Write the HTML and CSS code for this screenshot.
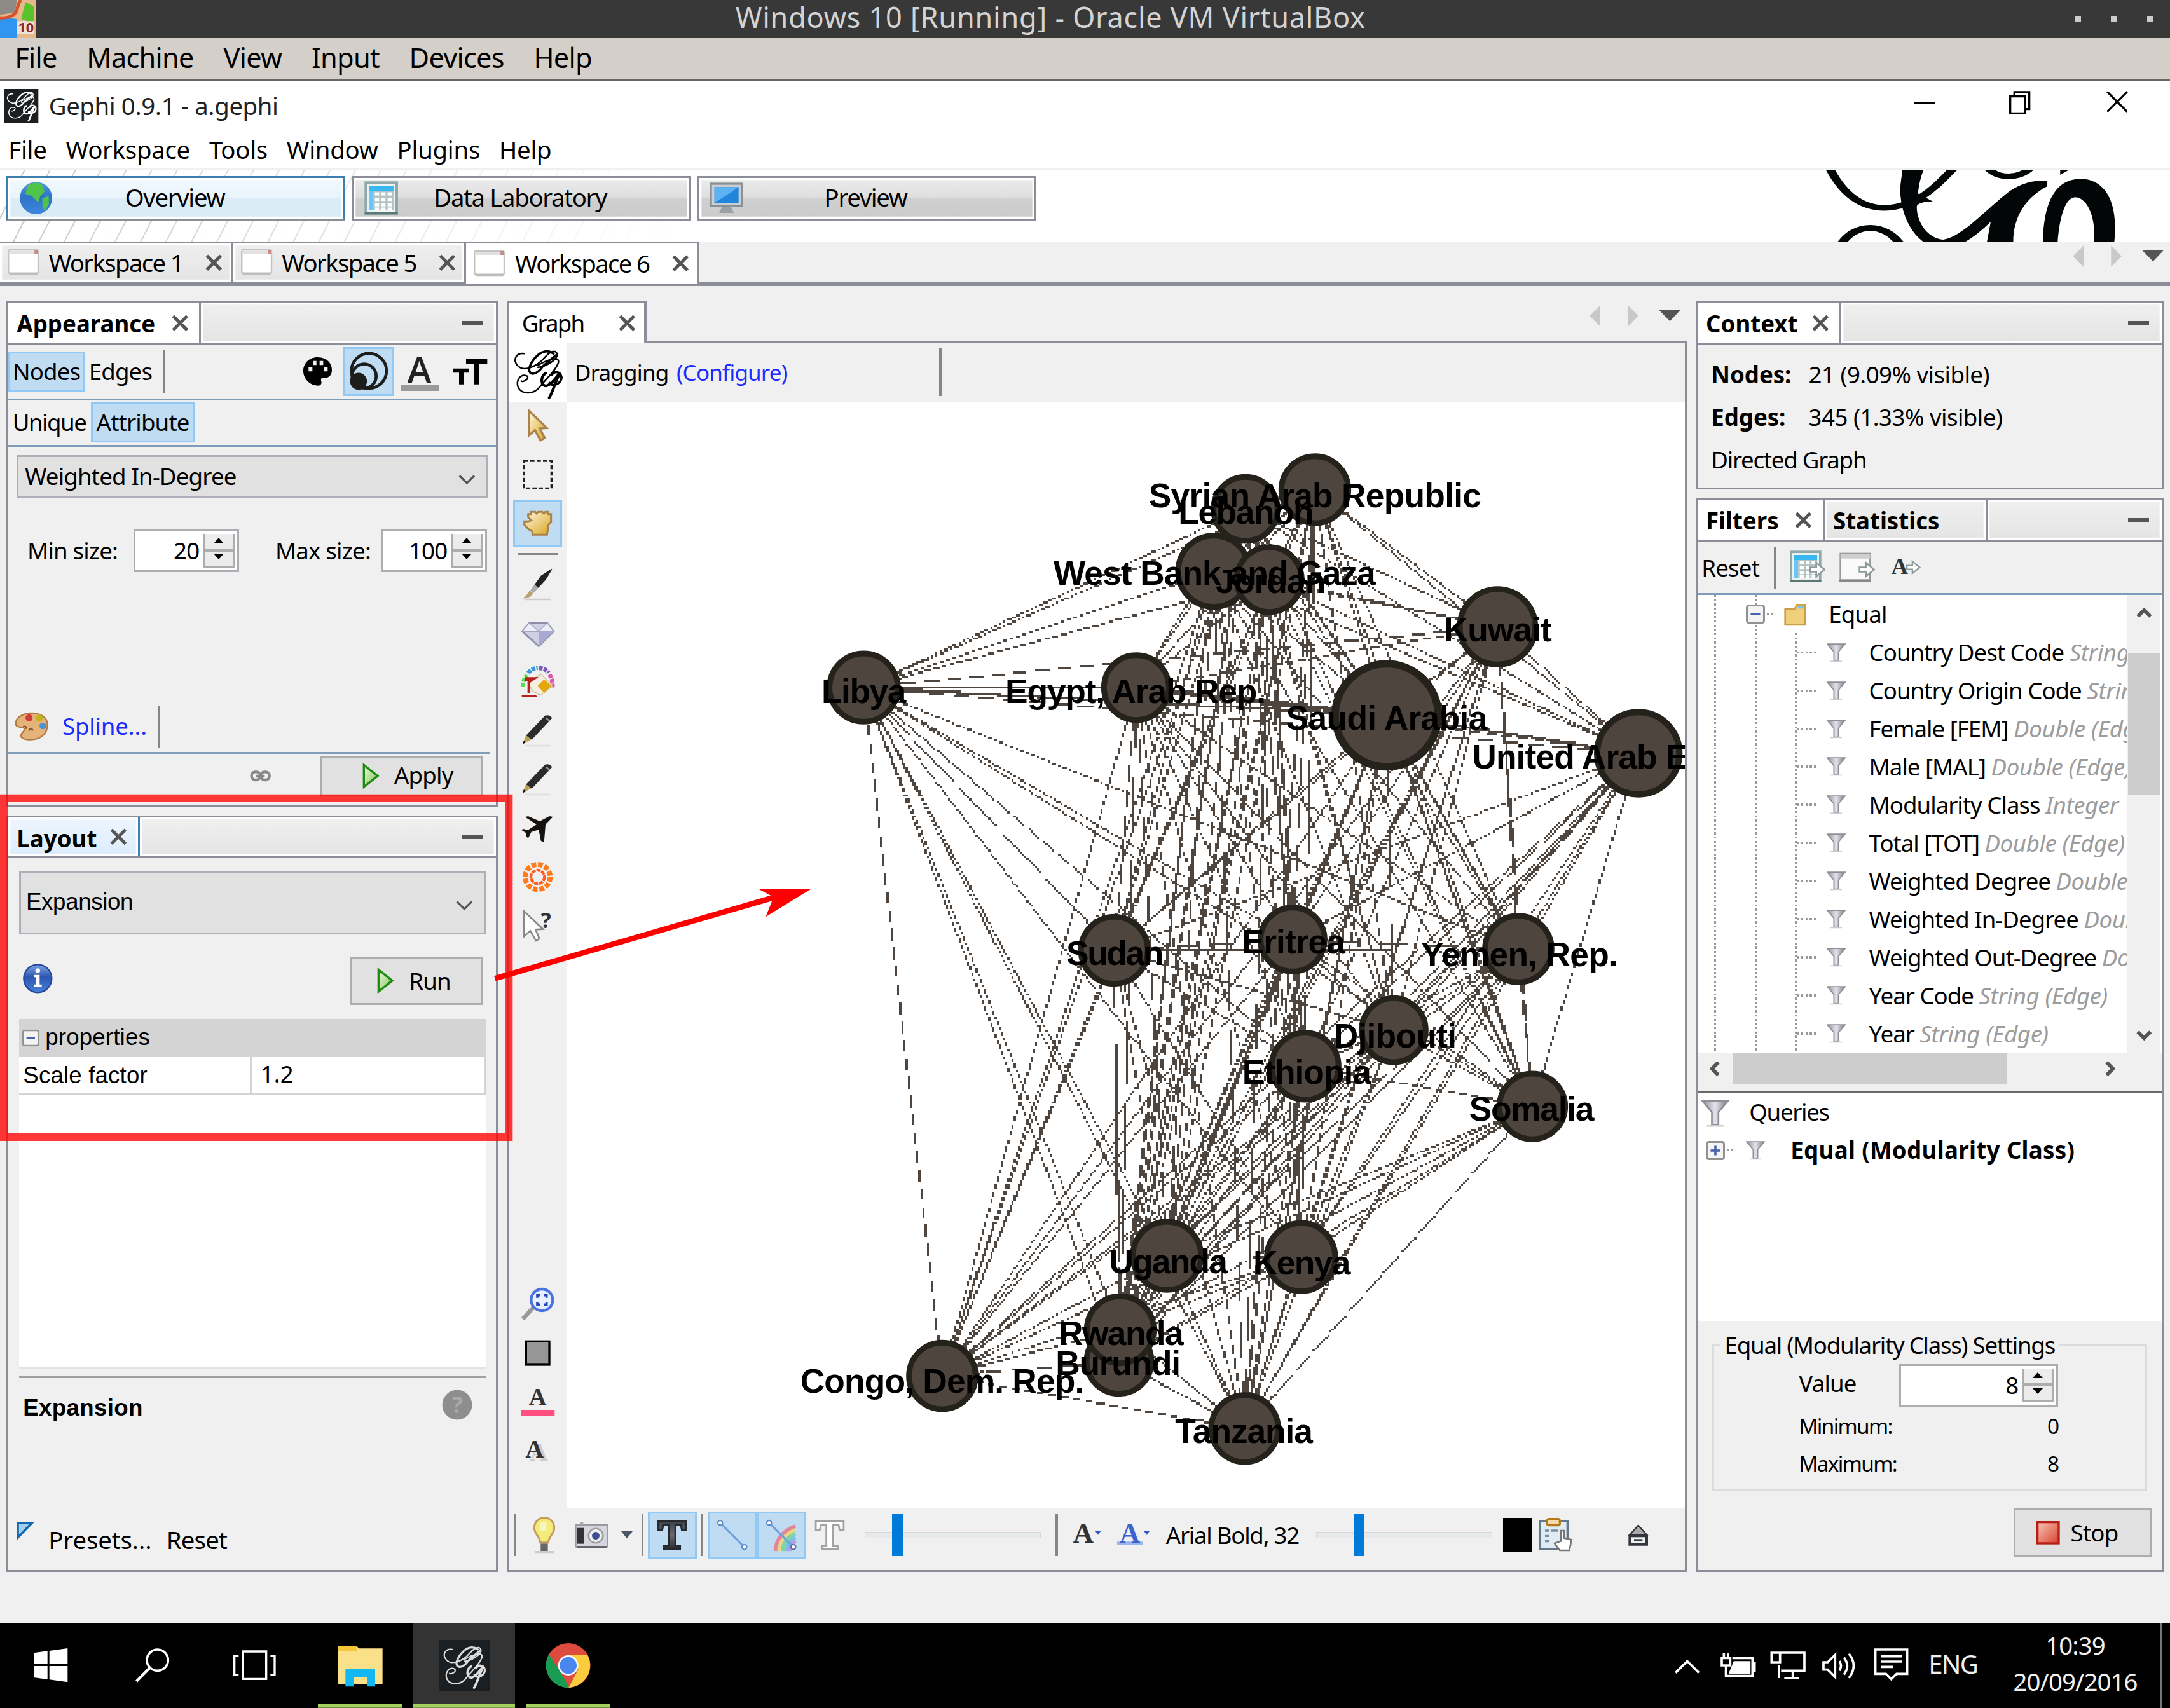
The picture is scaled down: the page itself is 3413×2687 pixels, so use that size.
FILE: index.html
```html
<!DOCTYPE html>
<html lang="en">
<head>
<meta charset="utf-8">
<title>Gephi 0.9.1 - a.gephi</title>
<link rel="stylesheet" href="styles.css">
</head>
<body>
<svg class="defs" width="0" height="0" aria-hidden="true">
  <defs>
    <linearGradient id="gMetal"><stop offset="0" stop-color="#8a8a92"/><stop offset=".5" stop-color="#e4e4ee"/><stop offset="1" stop-color="#77777f"/></linearGradient>
    <linearGradient id="gGreen" x1="0" y1="0" x2="1" y2="1"><stop offset="0" stop-color="#f0fae6"/><stop offset="1" stop-color="#7cc34a"/></linearGradient>
    <linearGradient id="gGold" x1="0" y1="0" x2="1" y2="1"><stop offset="0" stop-color="#fff6dc"/><stop offset="1" stop-color="#d9a520"/></linearGradient>
    <linearGradient id="gBlue" x1="0" y1="0" x2="0" y2="1"><stop offset="0" stop-color="#7ea4e4"/><stop offset=".45" stop-color="#2c57b0"/><stop offset="1" stop-color="#4a80dc"/></linearGradient>
    <linearGradient id="gRed" x1="0" y1="0" x2="1" y2="1"><stop offset="0" stop-color="#f8c4b8"/><stop offset="1" stop-color="#d8432c"/></linearGradient>
    <linearGradient id="gDark" x1="0" y1="0" x2="0" y2="1"><stop offset="0" stop-color="#3a3f48"/><stop offset=".5" stop-color="#6a6a6e"/><stop offset="1" stop-color="#2a2a30"/></linearGradient>
    <symbol id="x" viewBox="0 0 8 8"><path d="M.7.7 7.3 7.3M7.3.7.7 7.3" stroke="#555" stroke-width="1.5"/></symbol>
    <symbol id="funnel" viewBox="0 0 10 10"><path d="M.3.5h9.4L6.2 4.6V9.3H3.8V4.6z" fill="url(#gMetal)" stroke="#8f8f96" stroke-width=".6"/><path d="M2 9.6h6" stroke="#ccc" stroke-width=".6"/></symbol>
    <symbol id="play" viewBox="0 0 8 12"><path d="M.7.8v10.400L7.200 6z" fill="url(#gGreen)" stroke="#1d8a10" stroke-width="1"/></symbol>
    <symbol id="win" viewBox="0 0 16 16"><rect x=".5" y="1.500" width="15" height="12" rx="1" fill="#fff" stroke="#c4c4c4" stroke-width=".8"/><path d="M1 2h14v1.500H1z" fill="#e2e0e0"/><path d="M13.600 1.600h1.600v1.900h-1.600z" fill="#c98a8a"/><path d="M1 13h14v1.200H1z" fill="#bdbdbd"/></symbol>
    <symbol id="table" viewBox="0 0 16 16"><rect x=".7" y=".7" width="14.600" height="14.600" fill="#eef4f4" stroke="#8fa8a8" stroke-width="1.200"/><path d="M2.200 2.200h11.600v2.600H2.200z" fill="#38b8f0"/><path d="M2.200 4.800h2v9h-2z" fill="#66c8f8"/><path d="M4.200 4.800h9.600v9H4.200z" fill="#b4c4c4"/><path d="M5 6h2M8 6h2M11 6h2M5 8.600h2M8 8.600h2M11 8.600h2M5 11.200h2M8 11.200h2M11 11.200h2M5 13.200h2M8 13.200h2M11 13.200h2" stroke="#fff" stroke-width="1.500"/><path d="M.2 14.700h15.600v1H.2z" fill="#5e7676"/></symbol>
    <symbol id="gephi" viewBox="0 0 26 26"><g fill="none" stroke="currentColor" stroke-linecap="round"><path d="M6 3C2 2.500 0 6 2.500 9 6 13 13 9 16 5.500 18 3 21 .8 22.500 2.500 24.500 6 16 10 13 10" stroke-width=".8"/><path d="M21 3C15-1 9 7 8.500 11c0 3 3.500 3.500 7-1.500L22 4" stroke-width="1.200"/><path d="M13 9c5-3 11-5 10.500-1.500C22 12 17 16 14 20c-3 4-9 4-11 .5C1.500 17 4 13 7.500 14.500 9 16 5 18 4.500 17" stroke-width=".8"/><path d="M17 13c-3 2-2.500 7 .5 6.500 3.500-1 5.500-6 7-6.500-1.500 1-4.500 11.500-5.700 12.500" stroke-width="1.400"/><path d="M20 14c2-3 5.500-1 5 2-1 3-5 4-6 2" stroke-width="1.200"/></g></symbol>
    <symbol id="pencil" viewBox="0 0 16 16"><path d="M2 15h12" stroke="#ddd" stroke-width=".7"/><path d="M.8 14.300l1.700-4.200 2.400 2z" fill="#b9a052"/><path d="M.8 14.300l.7-1.700 1 .8z" fill="#111"/><path d="M2.500 10.200 11.500.8q2.200-.6 3.300 1.200L5.200 12.200z" fill="#2b2b2b"/><path d="M12 2l1.700 1.500" stroke="#999" stroke-width=".7"/></symbol>
    <symbol id="minus" viewBox="0 0 10 10"><rect x=".5" y=".5" width="9" height="9" rx="1" fill="#f4f4f4" stroke="#919191"/><path d="M2.500 5h5" stroke="#4661ae" stroke-width="1.200"/></symbol>
    <symbol id="xarrow" viewBox="0 0 8 8"><path d="M.5 3h3V.8L7.400 4 3.500 7.200V5h-3z" fill="#fff" stroke="#8c9a9a" stroke-width=".8"/></symbol>
  </defs>
</svg>

<header class="vbox-title">
  <svg class="vbox-icon" viewBox="0 0 17 18" preserveAspectRatio="none"><path d="M0 0h17v18H0z" fill="#e6b98a"/><path d="M0 0h8L7 6 0 7z" fill="#8d8a86"/><path d="M0 8l8 1v9H0z" fill="#2f95f0"/><path d="M12 1l4 2v8l-6-2z" fill="#58c32a"/><path d="M0 8.500q7 0 8-4T10 0" fill="none" stroke="#d9502c" stroke-width="1.500"/><path d="M8 10h8v6H8z" fill="#f0e0da"/><text x="8.500" y="15.300" font-size="6.500" font-weight="700" fill="#8c2a22">10</text></svg>
  <span class="vbox-caption">Windows 10 [Running] - Oracle VM VirtualBox</span>
  <span class="dots"><i></i><i></i><i></i></span>
</header>
<nav class="vbox-menu"><span>File</span><span>Machine</span><span>View</span><span>Input</span><span>Devices</span><span>Help</span></nav>

<div class="win-title">
  <svg class="app-icon" viewBox="0 0 26 26"><path d="M0 0h26v26H0z" fill="#1b1f22"/><use href="#gephi" x="1" y="1" width="24" height="24"/></svg>
  <span class="win-caption">Gephi 0.9.1 - a.gephi</span>
  <svg class="win-controls" viewBox="0 0 102 12"><g fill="none" stroke="#000"><path d="M0 6.500h10"/><path d="M45.500 3.500h7v8h-7zM47.500 3.500v-2h7v8h-2"/><path d="M91.300 1.300l9.400 9.400M100.700 1.300l-9.400 9.400"/></g></svg>
</div>
<nav class="app-menu"><span>File</span><span>Workspace</span><span>Tools</span><span>Window</span><span>Plugins</span><span>Help</span></nav>

<div class="banner">
  <div class="persp on"><svg viewBox="0 0 16 16"><circle cx="8" cy="8" r="7.600" fill="url(#gBlue)"/><circle cx="8" cy="8" r="7.600" fill="#2f8fe0" opacity=".5"/><path d="M4 2q4-2.500 7 0l1 3-2 2-1 3-3-3-3-1zM11 8l3-1v4l-2 3-1-2z" fill="#4fc34a"/></svg><span>Overview</span></div>
  <div class="persp"><svg viewBox="0 0 16 16"><use href="#table"/></svg><span>Data Laboratory</span></div>
  <div class="persp"><svg viewBox="0 0 16 16"><rect x=".6" y="1.200" width="14.800" height="10.600" fill="#c9ced2" stroke="#8a9196"/><path d="M2.300 2.800h11.400v7.400H2.300z" fill="#1f86dc"/><path d="M2.300 2.800h11.400l-6 4-5.400 3.400z" fill="#5cb2f2"/><path d="M6 12h4l1.500 3h-7z" fill="#9aa0a5"/></svg><span>Preview</span></div>
  <svg class="banner-logo" viewBox="480 800 930 340" preserveAspectRatio="none">
    <g fill="none" stroke="#020606">
      <path d="M508 790C545 900 600 980 680 980C790 975 850 860 900 785" stroke-width="27"/>
      <path d="M545 1150C590 1050 680 1050 728 1150" stroke-width="28"/>
      <path d="M1000 790C1030 845 1100 845 1135 790" stroke-width="26"/>
    </g>
    <path fill-rule="evenodd" d="M735 795h68C790 840 786 880 784 912L830 950C800 950 780 960 780 975C780 1050 815 1125 862 1130C920 1120 1000 980 1070 900C1110 860 1150 848 1186 852V878C1120 930 1080 1020 1080 1142H998L1010 1045C980 1090 950 1125 925 1145H805C760 1100 735 1010 730 930C725 880 735 830 735 795z" fill="#020606"/>
    <path d="M786 915L860 850L840 900C820 935 800 955 780 965L862 1128C935 1110 985 1010 1030 945V800H905L870 855z" fill="#fff" fill-opacity="0"/>
    <path d="M1172 1145C1175 980 1200 843 1292 843C1385 850 1405 1000 1394 1145H1330C1340 1030 1310 930 1272 930C1235 935 1222 1060 1218 1145z" fill="#020606"/>
    <path d="M1226 800h28l-28 24z" fill="#020606"/>
  </svg>
</div>

<div class="ws-tabs">
  <div class="ws"><svg viewBox="0 0 16 16"><use href="#win"/></svg><span>Workspace 1</span><svg class="x"><use href="#x"/></svg></div>
  <div class="ws"><svg viewBox="0 0 16 16"><use href="#win"/></svg><span>Workspace 5</span><svg class="x"><use href="#x"/></svg></div>
  <div class="ws on"><svg viewBox="0 0 16 16"><use href="#win"/></svg><span>Workspace 6</span><svg class="x"><use href="#x"/></svg></div>
  <svg class="tab-nav" viewBox="0 0 44 12"><path d="M6 1v10L1 6z" fill="#c8c8c8"/><path d="M19 1v10l5-5z" fill="#c8c8c8"/><path d="M33.500 3h10.500l-5.200 5.500z" fill="#555"/></svg>
</div>

<main class="desk">
  <section class="col left">
    <div class="panel appearance">
      <div class="p-head"><div class="tab on w91"><b>Appearance</b><svg class="x"><use href="#x"/></svg></div><div class="fill"><i class="min"></i></div></div>
      <div class="a-bar1">
        <span class="tgl on nodes">Nodes</span><span class="edges">Edges</span><i class="vsep"></i>
        <svg class="ic-pal" viewBox="0 0 14 14"><path fill-rule="evenodd" d="M7 .3c4 0 6.800 2.500 6.800 6 0 2.700-1.500 3.700-3.300 3.700-2 0-2 .5-1.700 1.800.3 1-.3 1.900-1.300 1.900C3.500 13.700.3 10.500.3 6.800.3 3 3.200.3 7 .3zM2.800 5v2h1.800V5zM4.800 2v2h1.700V2zM8 2v2h1.700V2zM10 5v2h1.800V5z"/></svg>
        <span class="tgl on sizebtn"><svg viewBox="0 0 20 20"><g fill="none" stroke="#1d1d1b"><circle cx="10.200" cy="9.600" r="8.700" stroke-width="1.500"/><circle cx="7.800" cy="12.200" r="6" stroke-width="1.500"/></g><circle cx="5" cy="14.800" r="4.200" fill="#1d1d1b"/></svg></span>
        <span class="ic-a">A</span>
        <svg class="ic-tt" viewBox="0 0 16 13"><path d="M6 .5h10V3h-3.700v9.500H9.700V3H6zM0 5h7.500v2H5v5.500H2.700V7H0z"/></svg>
      </div>
      <div class="a-bar2"><span class="unique">Unique</span><span class="tgl on attr">Attribute</span></div>
      <div class="combo c1"><span>Weighted In-Degree</span><svg viewBox="0 0 8 5"><path d="M.5.7 4 4.200 7.500.7" fill="none" stroke="#555"/></svg></div>
      <div class="sizes"><span class="lb1">Min size:</span><div class="spin"><span>20</span><i></i></div><span class="lb2">Max size:</span><div class="spin"><span>100</span><i></i></div></div>
      <div class="spline"><svg viewBox="0 0 16 14"><path d="M8 .6c4 0 7.500 1.800 7.500 5.500 0 4-3 7-8 7-2.500 0-4.500-.6-4.500-2s1.600-1.500 1.600-3S.5 8 .5 5.500C.5 2.600 4 .6 8 .6z" fill="#e5b27a" stroke="#b07a42" stroke-width=".7"/><circle cx="6.800" cy="2.800" r="1.700" fill="#d33a3a"/><circle cx="11.600" cy="3" r="1.700" fill="#c4b425"/><circle cx="13.300" cy="6.600" r="1.600" fill="#4b93cf"/><path d="M6.800 8.800q.8-2 1.800 0M4 7q1.500-.6 1.500 1" stroke="#8a5c30" fill="none" stroke-width=".8"/></svg><span>Spline...</span><i class="vsep"></i></div>
      <div class="apply-row"><svg viewBox="0 0 10 6"><g fill="none" stroke="#888" stroke-width="1.300"><rect x=".8" y="1" width="4" height="3.800" rx="1.700"/><rect x="5.200" y="1" width="4" height="3.800" rx="1.700"/><path d="M3 3h4"/></g></svg><div class="btn apply"><svg viewBox="0 0 8 12"><use href="#play"/></svg><span>Apply</span></div></div>
    </div>
    <div class="panel layout">
      <div class="p-head"><div class="tab act w62"><b>Layout</b><svg class="x"><use href="#x"/></svg></div><div class="fill"><i class="min"></i></div></div>
      <div class="combo c2"><span>Expansion</span><svg viewBox="0 0 8 5"><path d="M.5.7 4 4.200 7.500.7" fill="none" stroke="#555"/></svg></div>
      <div class="run-row"><svg viewBox="0 0 14 14"><circle cx="7" cy="7" r="6.600" fill="url(#gBlue)" stroke="#27489a" stroke-width=".7"/><circle cx="7" cy="3.300" r="1.100" fill="#fff"/><path d="M5.300 5.300h2.600v4.500h1v1.100H5.200V9.800h1V6.400h-.9z" fill="#fff"/></svg><div class="btn run"><svg viewBox="0 0 8 12"><use href="#play"/></svg><span>Run</span></div></div>
      <div class="props">
        <div class="prop-head"><svg viewBox="0 0 10 10"><use href="#minus"/></svg><span>properties</span></div>
        <div class="prop-row"><span>Scale factor</span><span>1.2</span></div>
      </div>
      <div class="desc"><b>Expansion</b><svg viewBox="0 0 16 16"><circle cx="8" cy="8" r="7.500" fill="#8e8e8e"/><text x="8" y="12.200" text-anchor="middle" font-size="11.500" font-weight="700" fill="#a9a9a9">?</text></svg></div>
      <div class="presets"><svg viewBox="0 0 8 8"><path d="M.6.600h6.600L.6 7.400z" fill="#9fd0f0" stroke="#1268b0" stroke-width="1.100"/></svg><span>Presets...</span><span>Reset</span></div>
    </div>
  </section>

  <section class="col mid">
    <div class="g-tabs"><div class="g-tab"><span>Graph</span><svg class="x"><use href="#x"/></svg></div><div class="g-rest"><svg viewBox="0 0 44 12"><path d="M6 1v10L1 6z" fill="#c8c8c8"/><path d="M19 1v10l5-5z" fill="#c8c8c8"/><path d="M33.500 3h10.500l-5.200 5.500z" fill="#555"/></svg></div></div>
    <div class="g-body">
      <div class="g-top"><div class="g-logo"><svg viewBox="0 0 26 26"><use href="#gephi"/></svg></div><span class="drag">Dragging</span><span class="conf">(Configure)</span><i class="vsep"></i></div>
      <div class="g-main">
        <div class="tools">
          <svg viewBox="0 0 16 16"><path d="M4 1v11.500l2.700-2.400L9.300 15l2-1.200L9 9.300l3.300-.2z" fill="url(#gGold)" stroke="#a8824a" stroke-width="1"/></svg>
          <svg viewBox="0 0 16 16"><rect x="1.500" y="1.500" width="13" height="13" fill="none" stroke="#222" stroke-dasharray="2 1"/></svg>
          <span class="tgl on"><svg viewBox="0 0 16 16"><path d="M3.500 5V3.500h1.300V2.500h2l.7.8.7-.8h2l.7.8.7-.8h1.400v1h1.300v3.800l-1.200 1.200-.7 4.800H5.500v-1.500L3.500 10.500 1.700 8.500V7h1.800L5 6.500z" fill="url(#gGold)" stroke="#a8824a" stroke-width=".9"/></svg></span>
          <i class="hsep"></i>
          <svg viewBox="0 0 16 16"><path d="M2 15h12" stroke="#ccc" stroke-width=".7"/><path d="M.8 14.600q4 0 5-2.600L4.200 10.800Q3 13 .8 14.600z" fill="#b7a274"/><path d="M4.500 10.800 6.500 8l1.800 1.500-2.400 2.600z" fill="#aaa"/><path d="M6.500 8 9.500 3.800 14.500.5l.3.300-3 5L8.300 9.500z" fill="#222"/></svg>
          <svg viewBox="0 0 16 16"><path d="M4 3h8.500l3 4-7 7L.7 7z" fill="#cfcfe4" stroke="#8d8da8" stroke-width=".8"/><path d="M.7 7h14.800L12.500 3 8.500 7 4 3z" fill="#ecedf8" stroke="#a5a5bd" stroke-width=".4"/><path d="M8.500 7v7L15.500 7z" fill="#a9a9d4"/></svg>
          <svg viewBox="0 0 16 16"><g fill="none" stroke-width="2" stroke-dasharray="1.800 .5"><path d="M1 10q0-3.500 2-5.500" stroke="#5ed84e"/><path d="M3.500 3.500q1.500-2 4.500-2.400" stroke="#3a9ad8"/><path d="M8.500 1.200q3 0 4.700 2.200" stroke="#7a5ab8"/><path d="M13.500 4.300q1.700 2.200 1.500 6" stroke="#e050b0"/></g><path d="M3.500 8 9.500 4 15 9.500 9.500 14 5.500 12z" fill="#f4efe2" stroke="#c8b890" stroke-width=".4"/><path d="M8 9.500l3-3 3.500 3-3.500 3.500z" fill="#e4a60c"/><path d="M2 5.500h6.500L4.500 8v5h-1.300V7.500H2zM.5 13.800h6.500l1 1.200H.5z" fill="#b8201c"/></svg>
          <svg viewBox="0 0 16 16"><use href="#pencil"/></svg>
          <svg viewBox="0 0 16 16"><use href="#pencil"/></svg>
          <svg viewBox="0 0 16 16"><path d="M2 2.500l1.500-.4L9 4.500l4.500-2.400 1.700.3-3.500 3.600L11 14.500l-1.500-.8L8.500 8.500 5 9.500l-1.500 3-.8-.8-.2-1.700-2-1.200.5-.8 2.300.7L7.500 6z" fill="#151210"/></svg>
          <svg viewBox="0 0 16 16"><circle cx="8" cy="8" r="5.900" fill="none" stroke="#ff7a1a" stroke-width="2.400" stroke-dasharray="2.200 .889"/><circle cx="8" cy="8" r="3.200" fill="none" stroke="#ff5a20" stroke-width="1.300" stroke-dasharray="2 .4"/></svg>
          <svg viewBox="0 0 16 16"><path d="M1.500 1v12l3-2.700L7.200 15l1.600-1L7 9.700l3.500-.2z" fill="#fff" stroke="#888" stroke-width=".8"/><text x="9.500" y="9" font-size="10" font-weight="700" fill="#333">?</text></svg>
          <div class="grow"></div>
          <svg viewBox="0 0 16 16"><path d="M1 15l5-5.500" stroke="#999" stroke-width="2"/><circle cx="10" cy="6" r="5.100" fill="#e8f0ff" stroke="#4a72e0" stroke-width="1.300"/><path d="M7.800 5V3.800H9M11 3.800h1.200V5M12.200 7v1.200H11M9 8.200H7.800V7" fill="none" stroke="#2447b4" stroke-width="1.100"/></svg>
          <svg viewBox="0 0 16 16"><rect x="2.500" y="2.500" width="11" height="11" fill="#969696" stroke="#000"/></svg>
          <svg viewBox="0 0 16 16"><text class="ser" x="8" y="9.500" text-anchor="middle" font-size="11.500" fill="#333">A</text><path d="M0 12h16v2.800H0z" fill="#ff4f80"/></svg>
          <svg viewBox="0 0 16 16"><text class="ser" x="8.500" y="13" text-anchor="middle" font-size="12" fill="#ccc">A</text><text class="ser" x="6.500" y="11.500" text-anchor="middle" font-size="12" fill="#333">A</text></svg>
        </div>
        <div class="graph">
          <canvas id="edges" width="528" height="522"></canvas>
          <svg id="nodes" viewBox="0 0 528 522">
            <g fill="#4d453e" stroke="#25221c" stroke-width="2.700">
              <circle cx="353.100" cy="41.200" r="15.800"/><circle cx="305.400" cy="79.700" r="16.800"/><circle cx="320.400" cy="50.300" r="15.100"/><circle cx="331.600" cy="83.600" r="15.300"/><circle cx="439.300" cy="105.900" r="17.800"/><circle cx="140.200" cy="134.600" r="16.100"/><circle cx="268.900" cy="134.600" r="15.300"/><circle cx="387" cy="147.700" r="24.300" stroke-width="3.600"/><circle cx="505.700" cy="165.600" r="19.400" stroke-width="3"/><circle cx="258.500" cy="258.600" r="15.800"/><circle cx="342.600" cy="253.500" r="15.100"/><circle cx="449.100" cy="258" r="15.700"/><circle cx="390.300" cy="296.300" r="15.100"/><circle cx="348.500" cy="313.300" r="15.800"/><circle cx="455.700" cy="332.300" r="15.500"/><circle cx="283.300" cy="402.800" r="16.100"/><circle cx="346.600" cy="403.400" r="16.100"/><circle cx="260.700" cy="452.600" r="15.300"/><circle cx="261.300" cy="437.700" r="15.800"/><circle cx="177.300" cy="459.500" r="15.700"/><circle cx="320" cy="484.300" r="15.800"/>
            </g>
            <g class="labels">
              <text x="353.200" y="49.400" textLength="157">Syrian Arab Republic</text>
              <text x="320.700" y="57.200" textLength="64">Lebanon</text>
              <text x="305.800" y="86" textLength="152">West Bank and Gaza</text>
              <text x="332.300" y="90.100" textLength="52">Jordan</text>
              <text x="439.400" y="112.700" textLength="51">Kuwait</text>
              <text x="140.300" y="142" textLength="40">Libya</text>
              <text x="268.500" y="142" textLength="123">Egypt, Arab Rep.</text>
              <text x="387" y="154.500" textLength="95">Saudi Arabia</text>
              <text x="505.800" y="172.700" textLength="157">United Arab Emirates</text>
              <text x="258.800" y="265.400" textLength="46">Sudan</text>
              <text x="343" y="260.100" textLength="49">Eritrea</text>
              <text x="449.700" y="266" textLength="93">Yemen, Rep.</text>
              <text x="391" y="304.400" textLength="58">Djibouti</text>
              <text x="349.300" y="321.500" textLength="61">Ethiopia</text>
              <text x="455.400" y="339.100" textLength="59">Somalia</text>
              <text x="284" y="410.900" textLength="56">Uganda</text>
              <text x="347" y="411.500" textLength="46">Kenya</text>
              <text x="261.700" y="444.900" textLength="59">Rwanda</text>
              <text x="260.300" y="459" textLength="59">Burundi</text>
              <text x="177.300" y="467.500" textLength="134">Congo, Dem. Rep.</text>
              <text x="319.700" y="491.200" textLength="65">Tanzania</text>
            </g>
          </svg>
        </div>
      </div>
      <div class="g-bottom">
        <i class="vsep"></i>
        <svg class="bulb" viewBox="0 0 12 18"><path d="M6 .8c3 0 4.700 2.300 4.700 4.900S8 9.800 7.900 12.500H4.100C4 9.800 1.300 8.300 1.300 5.700S3 .8 6 .8z" fill="#f3ec7a" stroke="#c79a5a" stroke-width=".9"/><path d="M4 3h3v4H4z" fill="#fff" opacity=".5"/><path d="M4.300 13h3.400v4H4.300z" fill="#666"/><path d="M1.500 17h9" stroke="#ccc"/></svg>
        <svg class="cam" viewBox="0 0 16 14"><rect x=".5" y="2" width="15" height="10.500" rx=".6" fill="#d6d6de" stroke="#9a9a9e" stroke-width=".8"/><path d="M1 3.500h3.500v7.500H1z" fill="#333"/><path d="M2.500.6h1.600V2H2.500z" fill="#aaa"/><circle cx="10" cy="7.200" r="3.400" fill="#eee" stroke="#999" stroke-width=".7"/><circle cx="10" cy="7.200" r="1.800" fill="#3c4f90"/><path d="M1 12.500h14" stroke="#666"/></svg>
        <svg class="dn" viewBox="0 0 6 4"><path d="M.3.300h5.400L3 3.700z" fill="#4a5663"/></svg>
        <i class="vsep s2"></i>
        <span class="tgl on t1"><svg viewBox="0 0 16 16"><path d="M1 1h14v4.500h-2L12.500 3H9.700v10.500H12V15H4v-1.500h2.300V3H3.500L3 5.500H1z" fill="url(#gDark)" stroke="#25282e" stroke-width="1"/></svg></span>
        <i class="vsep s3"></i>
        <span class="tgl on t2"><svg viewBox="0 0 16 16"><path d="M1.500 1.500 14 14" stroke="#6f9fdc"/><circle cx="1.800" cy="1.800" r="1.200" fill="#fff" stroke="#5a88c8" stroke-width=".7"/><circle cx="14" cy="14" r="1.200" fill="#fff" stroke="#5a88c8" stroke-width=".7"/></svg></span>
        <span class="tgl on t3"><svg viewBox="0 0 16 16"><g fill="none" stroke-width="1.900" opacity=".75"><path d="M5 16Q5.500 7 15 3.500" stroke="#f06878"/><path d="M6.800 16Q7.500 8.500 15 5.400" stroke="#f4d468"/><path d="M8.600 16Q9 10 15 7.300" stroke="#6ed08a"/><path d="M10.400 16Q11 11.500 15 9.200" stroke="#5cb8ea"/><path d="M12.200 16q.3-3 2.800-5" stroke="#b088dc"/></g><path d="M1.500 1.500 14 14" stroke="#6f9fdc"/><circle cx="1.800" cy="1.800" r="1.200" fill="#fff" stroke="#5a88c8" stroke-width=".7"/><circle cx="14" cy="14" r="1.200" fill="#fff" stroke="#5a6cb0" stroke-width=".7"/></svg></span>
        <svg class="t4" viewBox="0 0 16 16"><path d="M1 1h14v4.500h-2L12.500 3H9.700v10.500H12V15H4v-1.500h2.300V3H3.500L3 5.500H1z" fill="#fff" stroke="#a2a2a2" stroke-width=".9"/></svg>
        <div class="slider sl1"><i></i></div>
        <i class="vsep s4"></i>
        <svg class="a1" viewBox="0 0 14 14"><text class="ser" x="5" y="10.500" text-anchor="middle" font-size="13.500" fill="#333">A</text><path d="M10.500 4.800h3l-1.500 2z" fill="#3358c8"/></svg>
        <svg class="a2" viewBox="0 0 16 14"><path d="M0 10h12v1.400H0z" fill="#9db4ee"/><text class="ser" x="6" y="10.500" text-anchor="middle" font-size="13.500" fill="#3c62d0">A</text><path d="M12.500 4.800h3L14 6.800z" fill="#3358c8"/></svg>
        <span class="fontname">Arial Bold, 32</span>
        <div class="slider sl2"><i></i></div>
        <i class="swatch"></i>
        <svg class="clip" viewBox="0 0 16 16"><rect x=".6" y="1.600" width="13" height="13" fill="#dfebf5" stroke="#64788a"/><rect x="4" y=".5" width="6" height="3" rx=".8" fill="#f4dcb0" stroke="#b67814"/><path d="M3 6h2M6 6h3M3 8.500h2M3 11h2" stroke="#7d8c98"/><path d="M10.500 6v5l-3 1 2.500 3.300h4.500l1-5-3.500-.8V6z" fill="#fff" stroke="#777" stroke-width=".8"/></svg>
        <svg class="up" viewBox="0 0 10 10"><path d="M5 .5 9 5H1z" fill="#aaa" stroke="#333" stroke-width=".7"/><path d="M1 5.500h8v4H1z" fill="#eee" stroke="#33363c" stroke-width="1.200"/><path d="M3 7.500h4" stroke="#33363c"/></svg>
      </div>
    </div>
  </section>

  <section class="col right">
    <div class="panel context">
      <div class="p-head"><div class="tab on w68"><b>Context</b><svg class="x"><use href="#x"/></svg></div><div class="fill"><i class="min"></i></div></div>
      <div class="ctx"><div><b>Nodes:</b><span>21 (9.09% visible)</span></div><div><b>Edges:</b><span>345 (1.33% visible)</span></div><div><span class="dg">Directed Graph</span></div></div>
    </div>
    <div class="panel filters">
      <div class="p-head"><div class="tab on w60"><b>Filters</b><svg class="x"><use href="#x"/></svg></div><div class="tab w77"><b>Statistics</b></div><div class="fill"><i class="min"></i></div></div>
      <div class="f-bar"><span>Reset</span><i class="vsep"></i>
        <svg viewBox="0 0 17 16"><use href="#table" width="15" height="15"/><use href="#xarrow" x="9" y="5" width="8" height="8"/></svg>
        <svg viewBox="0 0 17 16"><rect x=".5" y="1.500" width="14" height="12.500" fill="#fafafa" stroke="#9a9a9a" stroke-width=".8"/><path d="M.5 1.500h14v2.300H.5z" fill="#cfcfd2"/><path d="M0 14.200h15" stroke="#888"/><use href="#xarrow" x="9" y="5" width="8" height="8"/></svg>
        <svg viewBox="0 0 17 16"><text class="ser" x="5" y="11" text-anchor="middle" font-size="11" fill="#333">A</text><use href="#xarrow" x="8" y="4" width="7" height="8"/></svg>
      </div>
      <div class="tree">
        <div class="tree-view">
          <div class="t-row root"><svg class="box" viewBox="0 0 10 10"><use href="#minus"/></svg><i class="stub"></i><svg class="folder" viewBox="0 0 11 11"><path d="M.5 3h4.500l1-2h4v9.500H.5z" fill="#f0cf7c" stroke="#cc9e46" stroke-width=".8"/><path d="M6.500 1.500h3v1.300h-3z" fill="#7cc4e8"/></svg><span>Equal</span></div>
          <div class="t-kids">
            <div class="t-row"><i class="stub"></i><svg><use href="#funnel"/></svg><span>Country Dest Code <em>String (Edge)</em></span></div>
            <div class="t-row"><i class="stub"></i><svg><use href="#funnel"/></svg><span>Country Origin Code <em>String (Edge)</em></span></div>
            <div class="t-row"><i class="stub"></i><svg><use href="#funnel"/></svg><span>Female [FEM] <em>Double (Edge)</em></span></div>
            <div class="t-row"><i class="stub"></i><svg><use href="#funnel"/></svg><span>Male [MAL] <em>Double (Edge)</em></span></div>
            <div class="t-row"><i class="stub"></i><svg><use href="#funnel"/></svg><span>Modularity Class <em>Integer</em></span></div>
            <div class="t-row"><i class="stub"></i><svg><use href="#funnel"/></svg><span>Total [TOT] <em>Double (Edge)</em></span></div>
            <div class="t-row"><i class="stub"></i><svg><use href="#funnel"/></svg><span>Weighted Degree <em>Double</em></span></div>
            <div class="t-row"><i class="stub"></i><svg><use href="#funnel"/></svg><span>Weighted In-Degree <em>Double</em></span></div>
            <div class="t-row"><i class="stub"></i><svg><use href="#funnel"/></svg><span>Weighted Out-Degree <em>Double</em></span></div>
            <div class="t-row"><i class="stub"></i><svg><use href="#funnel"/></svg><span>Year Code <em>String (Edge)</em></span></div>
            <div class="t-row"><i class="stub"></i><svg><use href="#funnel"/></svg><span>Year <em>String (Edge)</em></span></div>
          </div>
        </div>
        <div class="vscroll"><svg viewBox="0 0 8 6"><path d="M1 5 4 2l3 3" fill="none" stroke="#555" stroke-width="1.700"/></svg><i></i><svg viewBox="0 0 8 6"><path d="M1 1l3 3 3-3" fill="none" stroke="#555" stroke-width="1.700"/></svg></div>
      </div>
      <div class="hscroll"><svg viewBox="0 0 6 8"><path d="M5 1 2 4l3 3" fill="none" stroke="#555" stroke-width="1.700"/></svg><i></i><svg viewBox="0 0 6 8"><path d="M1 1l3 3-3 3" fill="none" stroke="#555" stroke-width="1.700"/></svg></div>
      <div class="queries">
        <div class="q1"><svg><use href="#funnel"/></svg><span>Queries</span></div>
        <div class="q2"><svg class="box" viewBox="0 0 10 10"><use href="#minus"/><path d="M5 2.500v5" stroke="#4661ae" stroke-width="1.200"/></svg><i class="stub"></i><svg><use href="#funnel"/></svg><b>Equal (Modularity Class)</b></div>
      </div>
      <fieldset class="settings"><legend>Equal (Modularity Class) Settings</legend>
        <div class="s-row val"><span>Value</span><div class="spin"><span>8</span><i></i></div></div>
        <div class="s-row sm"><span>Minimum:</span><span>0</span></div>
        <div class="s-row sm"><span>Maximum:</span><span>8</span></div>
      </fieldset>
      <div class="btn stop"><svg viewBox="0 0 11 11"><rect x=".5" y=".5" width="10" height="10" fill="url(#gRed)" stroke="#b81f18"/></svg><span>Stop</span></div>
    </div>
  </section>
</main>

<footer class="taskbar">
  <div class="task"><svg viewBox="0 0 16 16"><path d="M0 2.200 6.500 1.300v6.200H0zM7.400 1.200 16 0v7.500H7.400zM0 8.400h6.500v6.300L0 13.800zM7.400 8.400H16V16l-8.600-1.200z" fill="#fff"/></svg></div>
  <div class="task"><svg viewBox="0 0 16 16"><circle cx="10.400" cy="5.600" r="5" fill="none" stroke="#fff" stroke-width="1.100"/><path d="M6.800 9.200.5 15.600" stroke="#fff" stroke-width="1.300"/></svg></div>
  <div class="task"><svg class="wide" viewBox="0 0 20 16"><path d="M4.500 1.500h11v13h-11zM2.500 3.500h-2v9h2M17.500 3.500h2v9h-2" fill="none" stroke="#fff"/></svg></div>
  <div class="task open"><svg class="big" viewBox="0 0 22 20"><path d="M.5 1h9l.8 1H21.500v17H.5z" fill="#fbe08a"/><path d="M.5 1h9v2.300h-9z" fill="#f5c63a"/><path d="M4 20v-8.500h14V20h-3.700v-4.500H8V20z" fill="#12b8f2"/></svg></div>
  <div class="task open cur"><svg class="gicon" viewBox="0 0 24 24"><path d="M0 0h24v24H0z" fill="#1b1f22"/><use href="#gephi" x="1" y="2" width="22" height="21"/></svg></div>
  <div class="task open chrome"><svg class="big" viewBox="0 0 22 22"><circle cx="11" cy="11" r="11" fill="#dd4b3e"/><path d="M1.500 5.500 7 14l4.500 8A11 11 0 0 1 1.500 5.500z" fill="#179c52"/><path d="M20.600 6H11l5 7-4.800 9A11 11 0 0 0 20.600 6z" fill="#fccc3f"/><circle cx="11" cy="11" r="5" fill="#fff"/><circle cx="11" cy="11" r="4.200" fill="#4a86f0"/></svg></div>
  <div class="grow"></div>
  <svg class="tray" viewBox="0 0 111 18"><g fill="none" stroke="#fff" stroke-width="1.100"><path d="M.7 12.500 6.200 7l5.500 5.500"/><path d="M27.500 5.500h9.500v8.500h-12.500v-2.500M37 8h1v3.500h-1"/><path d="M28.500 7.500h7v5h-9z" fill="#fff"/><path d="M22.500 5.500v3.500h4V5.500zM23.500 5.500V3M25.500 5.500V3M24.500 9v5"/><path d="M50 3h11.500v8.500h-11M56 11.500v3.500M52 15h7M49.500 15V9M46 3h4v4.500h-4z"/><path d="M70.500 7.500h2L76 4v10.500L72.500 11h-2zM78 7q1.500 2.300 0 4.500M80.200 5.300q3 4 0 8M82.500 3.500q4.500 5.500 0 11.500"/><path d="M95 1.500h15v11.500h-5L102.500 15.500 100 13h-5zM97.500 4.700h10M97.500 7.200h10M97.500 9.700h6"/></g></svg>
  <span class="lang">ENG</span>
  <div class="clock"><span>10:39</span><span>20/09/2016</span></div>
</footer>

<svg class="marks" viewBox="0 0 1024 806">
  <path d="M-1.600 376.700H240.100V536.700H1.800V376.700" fill="none" stroke="#f00" stroke-opacity=".78" stroke-width="3.600"/>
  <path d="M233.500 461.800 366 423.300" stroke="#f00" stroke-width="2.600"/>
  <path d="M357.600 419.400H383L361.300 432.700 365 423.400z" fill="#f00"/>
</svg>
<script src="edges.js"></script>
</body>
</html>
```
FILE: styles.css
```css
* { box-sizing: border-box; }
html { overflow: hidden; background: #f0f0f0; }
body {
  margin: 0; zoom: 3.33333; width: 1024px; height: 806px; overflow: hidden; position: relative;
  display: flex; flex-direction: column; background: #f0f0f0; color: #000;
  font: 11px/14px "Noto Sans", "Open Sans", sans-serif; letter-spacing: -0.25px; white-space: nowrap;
}
svg { display: block; flex: none; overflow: visible; }
.defs { position: absolute; }
i { font-style: normal; display: block; flex: none; }
.grow { flex: 1; }
.ser { font-family: "Liberation Serif", serif; font-weight: 700; letter-spacing: 0; }
.x { width: 8px; height: 8px; }
.vsep { width: 1px; height: 20px; background: #858585; }
.tgl.on { background: #c0dcf3; border: 1px solid #90c8f6; display: flex; align-items: center; justify-content: center; }

/* host window */
.vbox-title { height: 18px; flex: none; background: #383838; display: flex; align-items: center; }
.vbox-icon { width: 17px; height: 18px; letter-spacing: 0; }
.vbox-caption { margin: -2px 0 0 330px; width: 632px; font-size: 13.500px; line-height: 16px; color: #d3d3d3; letter-spacing: .23px; }
.dots { display: flex; gap: 14px; }
.dots i { width: 3px; height: 3px; background: #ccc; }
.vbox-menu { height: 20px; flex: none; background: #d4cfc8; border-bottom: 1px solid #686868; display: flex; gap: 14px; padding: 0 7px; align-items: center; font-size: 13px; letter-spacing: -.22px; }

/* application window */
.win-title { height: 24px; flex: none; background: #fff; display: flex; align-items: center; padding-left: 2px; color: #222; }
.app-icon { width: 16px; height: 16px; color: #fff; }
.win-caption { margin-left: 5px; width: 880px; font-size: 11.500px; letter-spacing: -.12px; }
.win-controls { width: 102px; height: 12px; margin-top: -4px; }
.app-menu { height: 18px; flex: none; background: #fff; border-bottom: 1px solid #f0f0f0; display: flex; gap: 9px; padding-left: 4px; align-items: center; font-size: 11.500px; letter-spacing: -.08px; }
.banner { height: 34px; flex: none; display: flex; gap: 3px; padding: 3px 0 0 3px; position: relative;
  background: linear-gradient(90deg, rgba(255,255,255,0) 0, #fff 320px), repeating-linear-gradient(117deg, #fff 0 9.900px, #ccc 10.200px 10.700px); }
.persp { width: 160px; height: 21px; border: 1px solid #8b8d98; box-shadow: inset 0 0 0 1px #fff; display: flex; align-items: center; padding-left: 5px; background: linear-gradient(#ececec, #dedede 50%, #d0d0d0 50%, #cbcbcb); font-size: 11.500px; letter-spacing: -.4px; }
.persp.on { border-color: #3c7fb1 #3c7fb1 #8b8d98; background: linear-gradient(#f2f9fd, #e8f4fb 50%, #dcedf7 50%, #d8eaf5); }
.persp svg { width: 16px; height: 16px; }
.persp span { flex: 1; text-align: center; padding: 0 22px 1px 0; }
.banner-logo { position: absolute; left: 858.800px; top: 0; width: 141.100px; height: 34px; overflow: hidden; }
.ws-tabs { height: 21px; flex: none; display: flex; border-bottom: 2px solid #8b8d98; position: relative; }
.ws { width: 110px; height: 19px; border: solid #8b8d98; border-width: 1px 1px 0 0; box-shadow: inset 0 0 0 1px #fff; background: linear-gradient(#efefef, #e4e4e4); display: flex; align-items: center; padding-left: 3px; font-size: 11.500px; letter-spacing: -.5px; }
.ws.on { background: #fff; height: 20px; }
.ws svg { width: 16px; height: 15px; }
.ws span { width: 74px; margin-left: 4px; }
.ws .x { width: 8px; height: 8px; }
.tab-nav { width: 44px; height: 12px; margin: 1px 0 0 647px; }

/* docked columns */
.desk { flex: none; height: 631px; display: grid; grid-template-columns: 232px 557px 221px; column-gap: 4px; padding: 7px 0 0 3px; }
.col { height: 600px; display: flex; flex-direction: column; }
.panel { border: 1px solid #8b8d98; display: flex; flex-direction: column; flex: none; }
.p-head { height: 20px; flex: none; display: flex; border-bottom: 1px solid #8b8d98; }
.tab, .fill { border-right: 1px solid #8b8d98; background: linear-gradient(#f0f0f0, #e4e4e4); box-shadow: inset 0 0 0 1px #fff; display: flex; align-items: center; justify-content: space-between; padding: 0 5px 0 4px; }
.tab b { letter-spacing: 0; padding-top: 1px; }
.tab.on { background: #fff; }
.tab.act { background: linear-gradient(#eef6ff, #dcebfc); border-right-color: #3c7fb1; }
.fill { flex: 1; border: 0; justify-content: flex-end; padding-right: 6px; }
.min { width: 10px; height: 2px; background: #555; }
.w91 { width: 91px; } .w62 { width: 62px; } .w68 { width: 68px; } .w60 { width: 60px; } .w77 { width: 77px; }
.combo { border: 1px solid #adb0b8; background: #e1e1e1; display: flex; align-items: center; justify-content: space-between; padding: 0 5px 0 3px; flex: none; }
.combo svg { width: 8px; height: 5px; margin-top: 3px; }
.btn { border: 1px solid #adadad; background: #e1e1e1; display: flex; align-items: center; }
.btn svg { width: 8px; height: 13px; }
.spin { border: 1px solid #abadb3; background: #fff; height: 20px; width: 50px; display: flex; justify-content: flex-end; align-items: center; gap: 2px; padding-right: 1px; }
.spin i { width: 15px; height: 16px; border: 1px solid #adadad; border-top: 0; background: linear-gradient(#ececec 0 7px, #adadad 7px 8.500px, #ececec 8.500px); position: relative; }
.spin i::before, .spin i::after { content: ""; position: absolute; left: 4px; border: 2.600px solid transparent; }
.spin i::before { top: -.5px; border-bottom: 3px solid #000; }
.spin i::after { top: 9.500px; border-top: 3px solid #000; }

.appearance { height: 239px; }
.a-bar1 { height: 26px; flex: none; border-bottom: 1px solid #7f9db9; display: flex; align-items: center; }
.nodes { width: 36px; height: 19px; }
.edges { width: 34px; margin-left: 2px; }
.a-bar1 .vsep { margin-left: 1px; }
.ic-pal { width: 14px; height: 14px; margin-left: 65px; }
.sizebtn { width: 24px; height: 23px; margin-left: 5px; }
.sizebtn svg { width: 19px; height: 19px; }
.ic-a { width: 18px; height: 18px; margin-left: 3px; font: 600 17px/15px "Open Sans", sans-serif; text-align: center; color: #222; border-bottom: 3px solid #9a9a9a; letter-spacing: 0; }
.ic-tt { width: 16px; height: 13px; margin-left: 7px; }
.a-bar2 { height: 22px; flex: none; border-bottom: 1px solid #7f9db9; display: flex; align-items: center; padding-left: 2px; }
.unique { width: 37px; letter-spacing: -.45px; }
.attr { width: 49px; height: 19px; }
.c1 { height: 20px; margin: 4px 4px 0; }
.sizes { display: flex; align-items: center; margin: 15px 4px 0 9px; height: 20px; flex: none; }
.lb1 { width: 50px; } .lb2 { width: 50px; margin-left: 17px; }
.spline { display: flex; align-items: center; height: 20px; margin: 63px 0 0 3px; flex: none; color: #1a2cff; letter-spacing: -.05px; }
.spline svg { width: 16px; height: 14px; }
.spline span { width: 45px; margin-left: 6.500px; }
.apply-row { border-top: 1px solid #7f9db9; margin: 2px 3px 0 0; display: flex; align-items: center; padding: 1px 3px 0 114px; height: 21px; flex: none; }
.apply-row > svg { width: 10px; height: 6px; }
.apply { width: 77px; height: 19px; margin-left: auto; padding-left: 19px; gap: 7px; }
.apply span { margin-top: -1px; }

.layout { height: 357px; margin-top: 4px; }
.layout .p-head { height: 19px; }
.layout .tab b { padding-top: 2px; }
.c2 { height: 30px; margin: 6px 5px 0; font-family: "Liberation Sans", sans-serif; letter-spacing: -.1px; padding-left: 2.500px; }
.run-row { display: flex; justify-content: space-between; align-items: center; margin: 10.500px 6px 0 7px; height: 23px; flex: none; }
.run-row > svg { width: 14px; height: 14px; margin-bottom: 2px; }
.run { width: 63px; height: 23px; padding-left: 12px; gap: 7px; }
.props { margin: 6.500px 5px 0; height: 165.500px; flex: none; background: #fff; border-bottom: 1px solid #e3e3e3; font-family: "Liberation Sans", sans-serif; letter-spacing: .05px; }
.prop-head { height: 18px; background: #d4d4d4; display: flex; align-items: center; gap: 3px; padding-left: 1.500px; }
.prop-head svg { width: 8px; height: 9px; }
.prop-row { height: 18px; display: grid; grid-template-columns: 110px 1fr; border: solid #d4d4d4; border-width: 0 1px 1px 0; }
.prop-row span { padding: 2px 0 0 2px; border-right: 1px solid #d4d4d4; }
.prop-row span + span { border: 0; padding: 1px 0 0 4px; font-family: "Noto Sans", sans-serif; }
.desc { margin: 3px 5px 0; border-top: 1.400px solid #a0a0a0; display: flex; justify-content: space-between; padding: 5px 6px 0 2px; height: 65px; flex: none; }
.desc b { font: 700 11px/18px "Liberation Sans", sans-serif; letter-spacing: .1px; }
.desc svg { width: 15px; height: 15px; }
.presets { display: flex; gap: 7px; padding: 4px 0 0 4px; font-size: 11.500px; }
.presets svg { width: 8px; height: 8px; }
.presets span { margin-top: 1.500px; } .presets span:nth-of-type(1) { letter-spacing: -.02px; }

/* graph window */
.mid { margin-left: 0; }
.g-tabs { display: flex; height: 20px; flex: none; }
.g-tab { width: 66px; border: solid #8b8d98; border-width: 1px 1.500px 0 1.500px; background: #fff; display: flex; align-items: center; justify-content: space-between; padding: 0 4px 0 6px; letter-spacing: -.55px; }
.g-rest { flex: 1; border-bottom: 1px solid #8b8d98; display: flex; justify-content: flex-end; padding: 1px 3px 0 0; }
.g-rest svg { width: 44px; height: 12px; }
.g-body { flex: 1; border: 1px solid #8b8d98; border-top: 0; border-left-width: 1.500px; display: flex; flex-direction: column; min-height: 0; }
.g-top { height: 28px; flex: none; display: flex; align-items: center; }
.g-logo { width: 27px; height: 28px; background: #fff; display: flex; align-items: center; justify-content: center; }
.g-logo svg { width: 24px; height: 24px; }
.drag { width: 44px; margin-left: 4px; font-size: 10.500px; }
.conf { width: 124px; margin-left: 4px; color: #1a2cff; font-size: 10.500px; }
.g-top .vsep { height: 23px; margin-bottom: 1px; }
.g-main { height: 522px; flex: none; display: flex; }
.tools { width: 27px; display: flex; flex-direction: column; align-items: center; padding: 3px 0 19.500px 0; gap: 7px; }
.tools svg { width: 16px; height: 16px; }
.tools .tgl { width: 23px; height: 22px; margin: -3px 0; }
.hsep { width: 19px; height: 1px; background: #858585; margin: -1px 0 -1px; }
.graph { width: 528px; height: 522px; background: #fff; position: relative; overflow: hidden; }
.graph canvas { position: absolute; left: 0; top: 0; width: 528px; height: 522px; image-rendering: pixelated; }
.graph svg { position: absolute; left: 0; top: 0; width: 528px; height: 522px; overflow: hidden; }
.labels text { font: 700 16px "Liberation Sans", sans-serif; text-anchor: middle; letter-spacing: 0; }
.g-bottom { flex: 1; display: flex; align-items: center; padding: 0 0 4px 2.500px; }
.bulb { width: 12px; height: 18px; margin-left: 7px; }
.cam { width: 17px; height: 14px; margin-left: 8px; }
.dn { width: 6px; height: 4px; margin-left: 5px; }
.s2 { margin-left: 4px; }
.t1, .t2, .t3 { width: 23px; height: 22px; }
.t1 { margin-left: 2px; } .s3 { margin-left: 2px; } .t2 { margin-left: 2.500px; }
.t1 svg { width: 15px; height: 15px; } .t2 svg, .t3 svg { width: 15px; height: 15px; }
.t4 { width: 15px; height: 15px; margin-left: 4px; }
.slider { width: 83px; height: 3px; border: .600px solid #d6d6d6; background: #e7eaea; display: flex; align-items: center; }
.slider i { width: 5px; height: 20px; background: #007ad9; }
.sl1 { margin-left: 9px; } .sl1 i { margin-left: 12.500px; } .s4 { margin-left: 7px; }
.a1 { width: 14px; height: 14px; margin-left: 7px; }
.a2 { width: 16px; height: 14px; margin-left: 7px; }
.fontname { width: 64px; margin-left: 7px; font-size: 11px; letter-spacing: -.38px; }
.sl2 { margin-left: 7px; } .sl2 i { margin-left: 17.500px; }
.swatch { width: 14px; height: 16px; background: #000; margin-left: 5px; }
.clip { width: 16px; height: 16px; margin-left: 3px; }
.up { width: 10px; height: 10px; margin-left: 26px; }

/* context and filters */
.right { width: 221px; }
.context { height: 89px; }
.ctx { display: flex; flex-direction: column; gap: 6px; padding: 7px 6.500px 0; letter-spacing: -.16px; }
.ctx div { display: flex; } .ctx b { width: 46px; letter-spacing: -.02px; }
.dg { letter-spacing: -.38px; }
.filters { margin-top: 4px; height: 507px; }
.f-bar { height: 25px; flex: none; border-bottom: 1px solid #7f9db9; display: flex; align-items: center; padding-left: 2px; }
.f-bar span { width: 34px; }
.f-bar svg { width: 17px; height: 16px; margin-left: 6.500px; }
.tree { height: 216px; flex: none; background: #fff; display: flex; }
.tree-view { width: 203px; overflow: hidden; background:
  repeating-linear-gradient(#999 0 1px, transparent 1px 2px) 8px 0 / 1px 100% no-repeat,
  repeating-linear-gradient(#999 0 1px, transparent 1px 2px) 27px 0 / 1px 100% no-repeat, #fff; }
.t-row { height: 18px; display: flex; align-items: center; }
.root { padding-left: 23px; }
.box { width: 9px; height: 9px; background: #fff; }
.stub { width: 5px; height: 1px; background: repeating-linear-gradient(90deg, transparent 0 1px, #999 1px 2px); }
.folder { width: 11px; height: 11px; margin-left: 4px; }
.root span { margin-left: 10px; }
.t-kids { margin-left: 46px; background: repeating-linear-gradient(#999 0 1px, transparent 1px 2px) 0 0 / 1px 100% no-repeat; height: 198px; letter-spacing: -.3px; }
.t-kids .stub { width: 11px; }
.t-kids svg { width: 9px; height: 10px; margin-left: 4px; }
.t-kids span { margin-left: 11px; }
em { color: #9c9c9c; letter-spacing: -.12px; }
.vscroll { width: 15.500px; background: #f0f0f0; display: flex; flex-direction: column; justify-content: space-between; align-items: center; padding: 5px 0; }
.vscroll svg { width: 8px; height: 6px; }
.vscroll i { width: 15px; height: 67px; background: #cdcdcd; margin-top: -94px; }
.hscroll { height: 19px; flex: none; border-bottom: 1px solid #6a6a6a; display: flex; padding: 0 21px 3px 5px; align-items: center; background: #f0f0f0; }
.hscroll svg { width: 6px; height: 8px; }
.hscroll i { width: 129px; height: 15px; background: #cdcdcd; margin: 0 auto 0 6px; }
.queries { height: 107.500px; flex: none; background: #fff; }
.q1, .q2 { height: 18px; display: flex; align-items: center; }
.q1 svg { width: 13px; height: 14px; margin: 1px 0 0 2px; }
.q1 span { margin-left: 9.500px; letter-spacing: -.4px; }
.q2 { padding-left: 4px; }
.q2 svg { width: 9px; height: 10px; }
.q2 .box { height: 9px; } .q2 .stub + svg { margin-left: 5px; }
.q2 b { margin-left: 12px; letter-spacing: .1px; }
.settings { margin: 4.500px 7px 0; padding: 0 41px 0 20px; border: 1px solid #dcdcdc; height: 76px; min-width: 0; flex: none; }
.settings legend { margin-left: -17px; padding: 0 2px; letter-spacing: -.38px; }
.s-row { display: flex; justify-content: space-between; align-items: center; height: 18px; padding-left: 20px; }
.s-row .spin { width: 75px; margin-top: 2px; }
.s-row.val { height: 22px; }
.s-row.sm { font-size: 10px; letter-spacing: -.5px; }
.stop { width: 65px; height: 23px; margin: 8px 5px 0 auto; padding-left: 10px; gap: 5px; }
.stop svg { width: 11px; height: 11px; }

/* guest taskbar */
.taskbar { height: 40px; flex: none; background: #000; color: #f0f0f0; display: flex; align-items: center; padding-right: 4px; }
.task { width: 48px; height: 40px; display: flex; align-items: center; justify-content: center; }
.task svg { width: 16px; height: 16px; }
.task .wide { width: 20px; }
.task .big { width: 22px; height: 21px; }
.task .gicon { width: 24px; height: 24px; color: #ddd; }
.open { background: linear-gradient(#a2d15c, #a2d15c) 50% 100% / 40px 2px no-repeat; margin-left: 1px; }
.task:nth-child(4) { margin-left: 2px; }
.open.cur { background: linear-gradient(#a2d15c, #a2d15c) 50% 100% / 48px 2px no-repeat, #333; }
.tray { width: 111px; height: 18px; }
.lang { width: 40px; margin: -1px 0 0 9px; font-size: 12px; letter-spacing: -.5px; }
.clock { width: 70px; height: 40px; border-right: .800px solid #777; display: flex; flex-direction: column; align-items: center; justify-content: center; gap: 3px; font-size: 11.500px; padding: 0 11px 2px 0; letter-spacing: -.26px; }

.marks { position: absolute; left: 0; top: 0; width: 1024px; height: 806px; }
```
FILE: edges.js
```js
// Draws every edge between the node circles as a thin, non-antialiased line.
const nodes = [...document.querySelectorAll("#nodes circle")].map(c => ({
  x: +c.getAttribute("cx"), y: +c.getAttribute("cy"), r: +c.getAttribute("r")
}));
const ctx = document.getElementById("edges").getContext("2d");
ctx.fillStyle = "#4d453e";

function line(a, b, w) {
  const dx = b.x - a.x, dy = b.y - a.y, len = Math.hypot(dx, dy);
  const steep = Math.abs(dy) > Math.abs(dx);
  const half = w / 2 * len / Math.max(Math.abs(dx), Math.abs(dy));
  const from = Math.floor(steep ? Math.min(a.y, b.y) : Math.min(a.x, b.x));
  const to = Math.ceil(steep ? Math.max(a.y, b.y) : Math.max(a.x, b.x));
  for (let i = from; i < to; i++) {
    const c = i + 0.5;
    const m = steep ? a.x + (c - a.y) * dx / dy : a.y + (c - a.x) * dy / dx;
    for (let j = Math.ceil(m - half - 0.5); j + 0.5 < m + half; j++) {
      if (steep) ctx.fillRect(j, i, 1, 1); else ctx.fillRect(i, j, 1, 1);
    }
  }
}

function arrow(a, b) {
  const dx = b.x - a.x, dy = b.y - a.y, len = Math.hypot(dx, dy);
  const ux = dx / len, uy = dy / len;
  for (let k = 0; k < 3; k++) {
    const d = len - b.r - 1.5 - k;
    ctx.fillRect(Math.floor(a.x + ux * d), Math.floor(a.y + uy * d), 1, 1);
  }
}

const SAUDI = 7, EGYPT = 6;
nodes.forEach((a, i) => nodes.forEach((b, j) => {
  if (j <= i || (i * 7 + j * 5) % 19 === 0) return;
  const width = (i === EGYPT && j === SAUDI) ? 2.2 : (i === SAUDI || j === SAUDI) && (i + j) % 3 === 0 ? 1.1 : 0.62;
  line(a, b, width);
  arrow(a, b);
  arrow(b, a);
}));
```
